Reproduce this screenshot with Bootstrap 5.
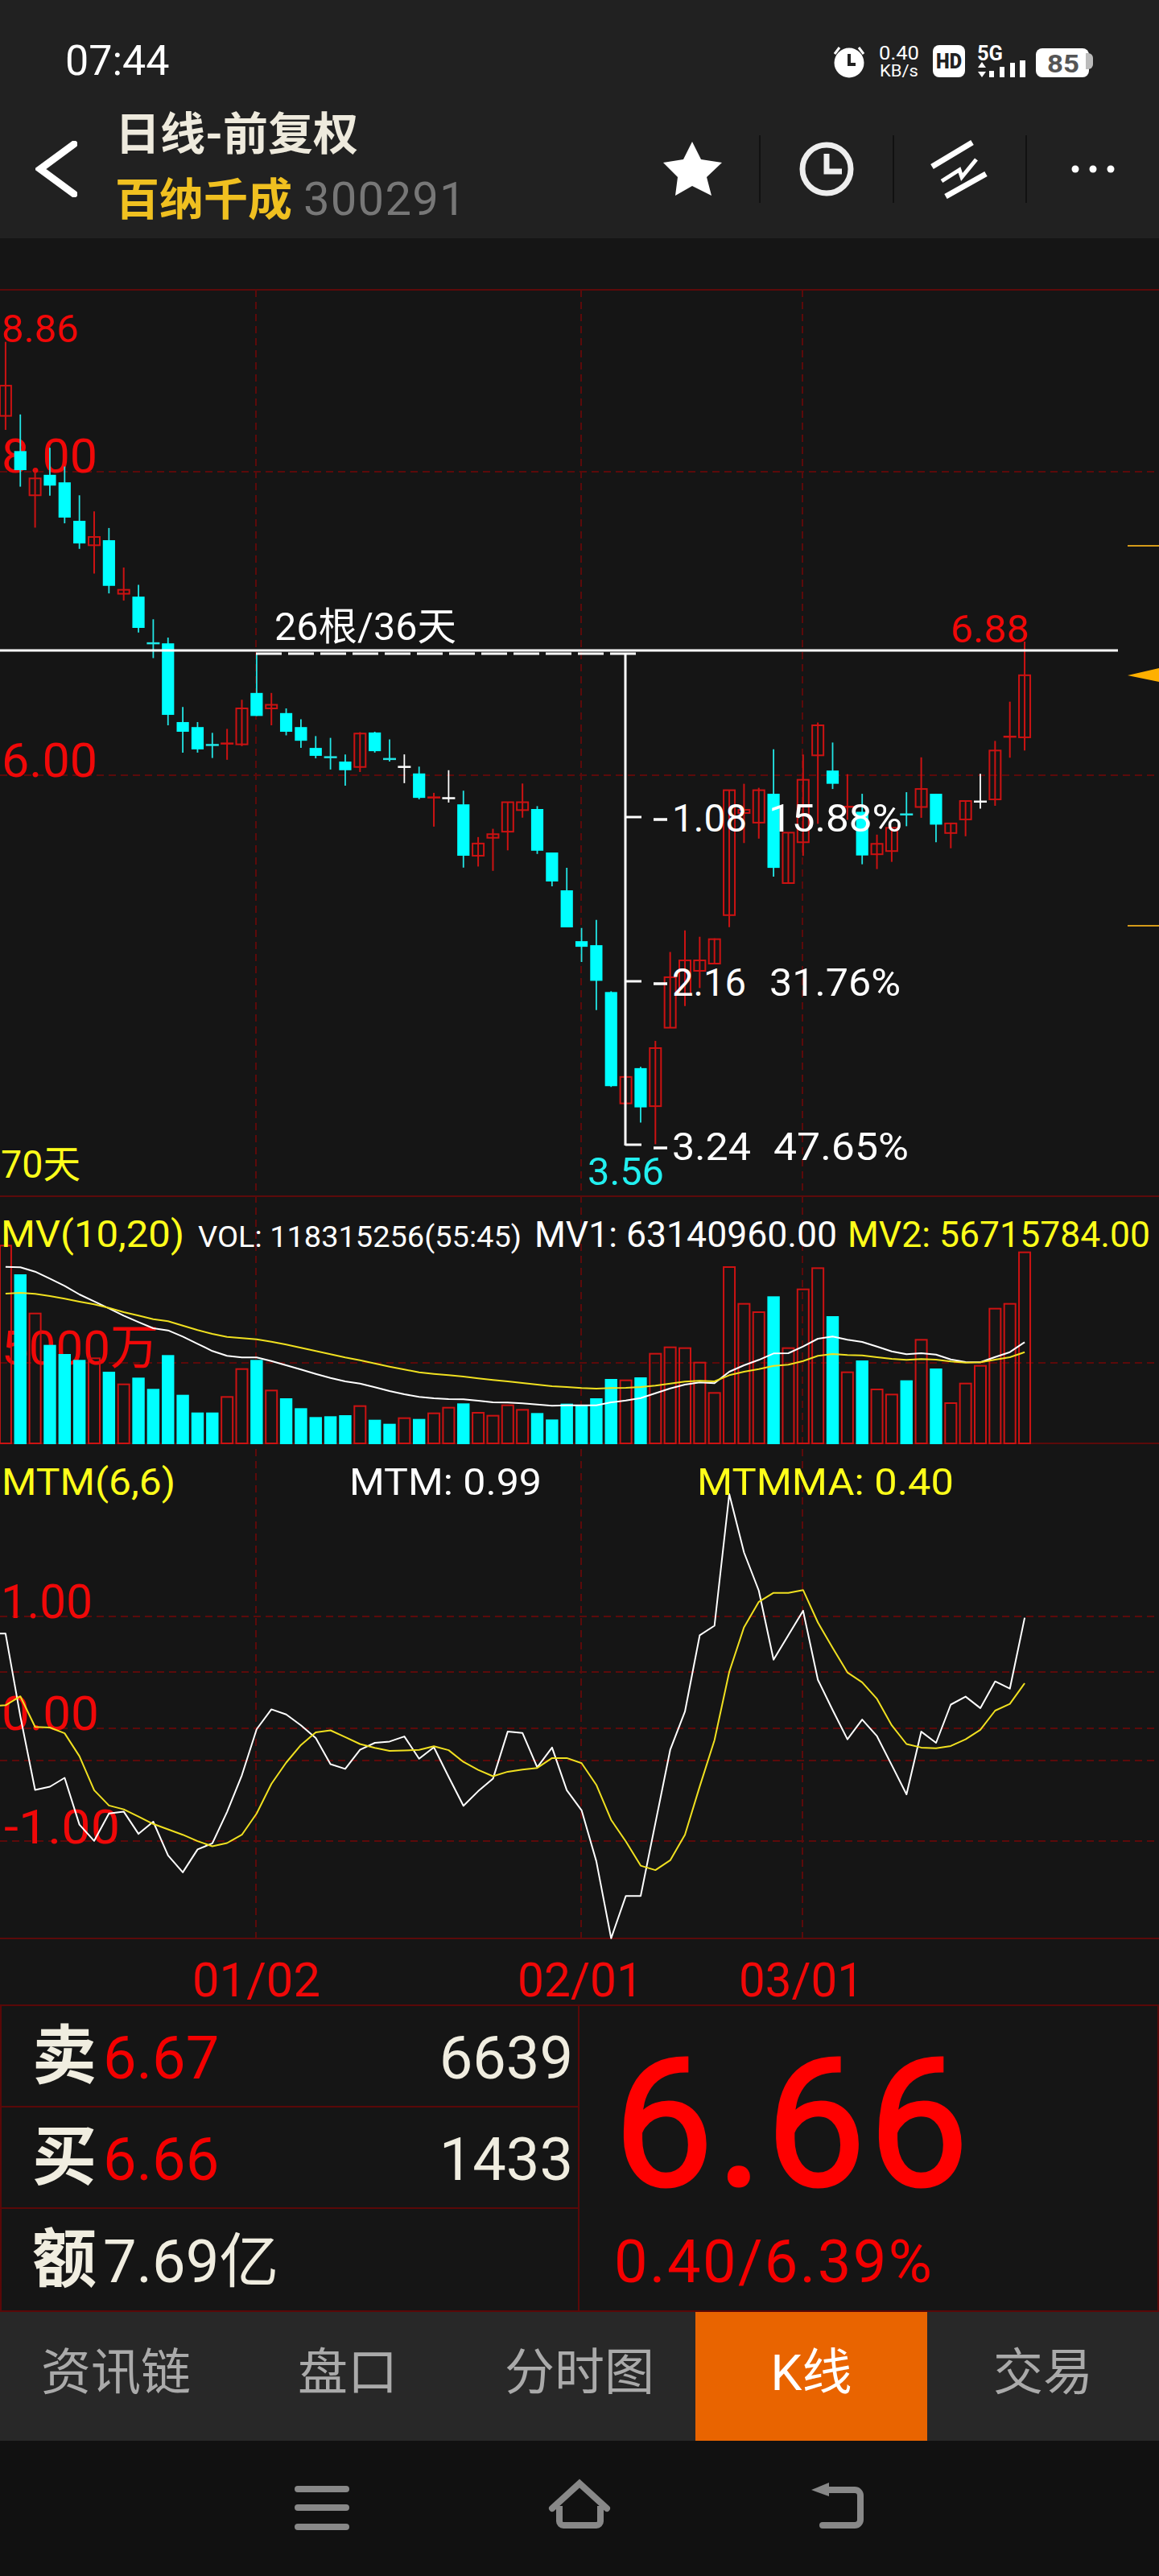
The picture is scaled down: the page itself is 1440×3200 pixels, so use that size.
<!DOCTYPE html>
<html lang="zh-CN">
<head>
<meta charset="utf-8">
<title>百纳千成 300291 日线</title>
<link href="https://cdn.jsdelivr.net/npm/bootstrap@5.3.0/dist/css/bootstrap.min.css" rel="stylesheet">
<style>
html,body{background:#151515;margin:0;width:1440px;}
body{font-family:Roboto,"Noto Sans CJK SC","Liberation Sans",sans-serif;color:#f0ede0;}
.top-head{background:#212121;height:296px;}
.status-row{height:130px;padding:46px 81px 0 81px;align-items:flex-start;}
.time-text{font-size:52px;line-height:60px;color:#fff;}
.status-icons{display:block;width:324px;height:60px;}
.tool-row{height:166px;padding-left:44px;}
.back-ico{display:block;width:52px;height:70px;margin-right:47px;margin-top:-6px;}
.title-stack{line-height:1;}
.title-main{font-size:56px;line-height:64px;font-weight:700;color:#eeeadd;margin-top:-12px;}
.title-sub{font-size:55px;line-height:64px;font-weight:700;color:#f0c020;margin-top:16px;}
.title-code{font-size:58px;font-weight:400;color:#777;margin-left:14px;letter-spacing:1.2px;}
.tool-group{margin-top:-6px;}
.tool-cell{width:165.5px;height:84px;display:flex;align-items:center;justify-content:center;border-right:2px solid #111;}
.tool-cell.last-cell{border-right:0;width:164px;}
.tool-cell svg{display:block;}
.chart-svg{display:block;width:1440px;height:2200px;margin-bottom:-6px;}
.quote-panel{height:382px;border:2px solid #5a0808;}
.quote-left{width:718px;border-right:2px solid #5a0808;}
.quote-row{height:126px;padding:6px 6px 0 38px;border-bottom:2px solid #5a0808;}
.quote-row.row-end{border-bottom:0;}
.q-mark{font-size:80px;line-height:1;font-weight:700;color:#f0ede0;width:88px;margin-top:-6px;}
.q-red{font-size:74px;line-height:1;color:#f40000;}
.q-cream{font-size:74px;line-height:1;color:#f0ede0;}
.quote-right{padding:36px 0 0 42px;}
.big-price{font-size:222px;line-height:1;color:#ff0000;letter-spacing:3px;-webkit-text-stroke:3px #ff0000;}
.big-change{font-size:74px;line-height:1;color:#f40000;margin-top:23px;margin-left:1px;letter-spacing:2.4px;}
.tab-strip{height:160px;background:#282828;}
.tab-link{font-size:62px;line-height:152px;height:160px;padding:0;color:#aaa;}
.tab-link:hover,.tab-link:focus{color:#aaa;}
.tab-on,.tab-on:hover,.tab-on:focus{background:#e96400;color:#fff;}
.sys-nav{height:168px;background:#111;}
.sys-nav svg{display:block;width:1440px;height:168px;}
</style>
</head>
<body>
<header class="top-head">
  <div class="d-flex justify-content-between status-row">
    <span class="time-text">07:44</span>
    <svg class="status-icons" viewBox="1036 46 324 60" aria-label="状态栏">
      <circle cx="1056" cy="78" r="18.5" fill="#fff"/>
      <path d="M1056 67v13h8" fill="none" stroke="#212121" stroke-width="4"/>
      <path d="M1038 67l6-8M1074 67l-6-8" stroke="#fff" stroke-width="3"/>
      <text x="1093" y="74" font-size="24" fill="#fff" textLength="50" lengthAdjust="spacingAndGlyphs" font-family="Roboto">0.40</text>
      <text x="1094" y="95" font-size="20" fill="#fff" textLength="48" lengthAdjust="spacingAndGlyphs" font-family="Roboto">KB/s</text>
      <rect x="1160" y="56" width="40" height="40" rx="8" fill="#fff"/>
      <text x="1164" y="85" font-size="26" font-weight="900" fill="#212121" textLength="32" lengthAdjust="spacingAndGlyphs" font-family="Roboto">HD</text>
      <text x="1215" y="75" font-size="25" font-weight="700" fill="#fff" textLength="32" lengthAdjust="spacingAndGlyphs" font-family="Roboto">5G</text>
      <path d="M1221 77l5 7h-10zM1221 96l-5-7h10z" fill="#fff"/>
      <path d="M1230 88h6v8h-6zM1243 83h6v13h-6zM1256 78h6v18h-6zM1268 75h7v21h-7z" fill="#fff"/>
      <rect x="1288" y="60" width="66" height="36" rx="8" fill="#fff"/>
      <path d="M1350 66h3a6 6 0 0 1 6 6v8a6 6 0 0 1-6 6h-3z" fill="#bbb"/>
      <text x="1302" y="90" font-size="32" font-weight="700" fill="#555" textLength="40" lengthAdjust="spacingAndGlyphs" font-family="Roboto">85</text>
    </svg>
  </div>
  <div class="d-flex align-items-center tool-row">
    <svg class="back-ico" viewBox="44 175 52 70"><path d="M92 179L50 210l42 31" fill="none" stroke="#fff" stroke-width="9" stroke-linecap="round" stroke-linejoin="miter"/></svg>
    <div class="title-stack">
      <div class="title-main">日线-前复权</div>
      <div class="title-sub">百纳千成<span class="title-code">300291</span></div>
    </div>
    <div class="ms-auto d-flex tool-group">
      <div class="tool-cell"><svg width="74" height="70" viewBox="824 176 74 70"><path d="M860 177l11 22 26 4-19 18 6 23-24-12-21 12 3-23-18-18 25-4z" fill="#fff"/></svg></div>
      <div class="tool-cell"><svg width="72" height="72" viewBox="992 174 72 72"><circle cx="1028" cy="210" r="30" fill="none" stroke="#eee" stroke-width="7"/><path d="M1028 191v22h19" fill="none" stroke="#eee" stroke-width="7"/></svg></div>
      <div class="tool-cell"><svg width="76" height="74" viewBox="1156 173 76 74"><path d="M1210 177l-50 30M1227 216l-50 28" fill="none" stroke="#fff" stroke-width="7"/><path d="M1172 225l22-14 3 9 18-22" fill="none" stroke="#fff" stroke-width="5"/></svg></div>
      <div class="tool-cell last-cell"><svg width="56" height="12" viewBox="1331 203 56 12"><circle cx="1337" cy="209" r="4.5" fill="#fff"/><circle cx="1359" cy="209" r="4.5" fill="#fff"/><circle cx="1381" cy="209" r="4.5" fill="#fff"/></svg></div>
    </div>
  </div>
</header>

<svg id="chart" class="chart-svg" viewBox="0 296 1440 2200" font-family="Roboto,'Noto Sans CJK SC',sans-serif"></svg>

<section class="d-flex quote-panel">
  <div class="quote-left">
    <div class="d-flex align-items-center quote-row"><span class="q-mark">卖</span><span class="q-red">6.67</span><span class="q-cream ms-auto">6639</span></div>
    <div class="d-flex align-items-center quote-row"><span class="q-mark">买</span><span class="q-red">6.66</span><span class="q-cream ms-auto">1433</span></div>
    <div class="d-flex align-items-center quote-row row-end"><span class="q-mark">额</span><span class="q-cream">7.69亿</span></div>
  </div>
  <div class="quote-right flex-grow-1">
    <div class="big-price">6.66</div>
    <div class="big-change">0.40/6.39%</div>
  </div>
</section>

<nav class="nav nav-justified tab-strip">
  <a class="nav-link tab-link" href="#">资讯链</a>
  <a class="nav-link tab-link" href="#">盘口</a>
  <a class="nav-link tab-link" href="#">分时图</a>
  <a class="nav-link tab-link tab-on" href="#">K线</a>
  <a class="nav-link tab-link" href="#">交易</a>
</nav>

<footer class="sys-nav">
  <svg viewBox="0 3032 1440 168" aria-label="系统导航">
    <path d="M370 3092h60M370 3115h60M370 3139h60" stroke="#888" stroke-width="8" stroke-linecap="round"/>
    <path d="M686 3116l34-31 34 31" fill="none" stroke="#888" stroke-width="8" stroke-linecap="round" stroke-linejoin="miter"/>
    <path d="M695 3113v19a5 5 0 0 0 5 5h41a5 5 0 0 0 5-5v-19" fill="none" stroke="#888" stroke-width="8"/>
    <path d="M1026 3093h36a7 7 0 0 1 7 7v30a7 7 0 0 1-7 7h-40" fill="none" stroke="#888" stroke-width="8" stroke-linecap="round"/>
    <path d="M1008 3093l22-9v17z" fill="#888"/>
  </svg>
</footer>

<script src="https://cdn.jsdelivr.net/npm/bootstrap@5.3.0/dist/js/bootstrap.bundle.min.js"></script>
<script>
(function(){
var svg=document.getElementById('chart'),out=[];
var xi=function(i){return 6.9+18.35*i;};
function T(s,x,y,size,color,w){out.push('<text x="'+x+'" y="'+y+'" font-size="'+size+'" fill="'+color+'"'+(w?' textLength="'+w+'" lengthAdjust="spacingAndGlyphs"':'')+'>'+s+'</text>');}
function L(x1,y1,x2,y2,c,sw,dash){out.push('<line x1="'+x1+'" y1="'+y1+'" x2="'+x2+'" y2="'+y2+'" stroke="'+c+'" stroke-width="'+sw+'"'+(dash?' stroke-dasharray="'+dash+'"':'')+'/>');}
function R(x,y,w,h,fill,stroke){out.push('<rect x="'+x+'" y="'+y+'" width="'+w+'" height="'+h+'" fill="'+fill+'"'+(stroke?' stroke="'+stroke+'" stroke-width="2"':'')+'/>');}
var GD='#5c0a0a',RED='#f00808',RB='#cc1212',CY='#00ffff',YE='#ffff1a';
[360,1486,1793,2408].forEach(function(y){L(0,y,1440,y,GD,2);});
[586,963,1693,2008,2077,2147,2187,2287].forEach(function(y){L(0,y,1440,y,GD,2,'9 6');});
[318,722,997].forEach(function(x){L(x,360,x,2408,GD,2,'9 6');});
T('8.86',2,425,48,RED,96);
T('8.00',2,587,60,RED,119);
T('6.00',2,965,60,RED,119);
T('70天',1,1463,48,YE,99);
T('5000万',2,1695,60,RED,195);
T('1.00',1,2010,60,RED,114);
T('0.00',2,2149,60,RED,121);
T('-1.00',5,2290,60,RED,144);
var a=function(v){return 380+v/2.24;},b=function(v){return 700+v/2.01;},c=function(v){return v;};
var K=[
[100,222,306,345,'r',a],[302,404,457,503,'c',a],[452,480,527,617,'r',a],[395,470,500,528,'c',a],[447,491,589,605,'c',a],
[527,598,661,676,'c',a],[572,643,666,745,'r',a],[618,652,779,800,'c',a],[728,790,801,820,'r',a],[776,809,896,909,'c',a],
[872,936,938,980,'c',a],[923,939,1138,1167,'c',a],[1116,1158,1185,1243,'c',a],[1158,1172,1234,1243,'c',a],[1188,1219,1221,1258,'c',a],
[1177,1215,1219,1263,'r',a],[1096,1120,1220,1225,'r',a],[968,1077,1141,1141,'c',a],[1077,1110,1120,1167,'r',a],[1120,1133,1185,1195,'c',a],
[1150,1172,1210,1230,'c',a],[1197,1230,1252,1259,'c',a],[1202,1253,1255,1290,'c',a],[1248,1268,1292,1335,'c',a],[1186,1190,1283,1297,'r',a],
[1185,1187,1239,1243,'c',a],[1206,1258,1260,1268,'c',a],[1248,1280,1282,1328,'w',a],[1282,1301,1369,1373,'c',a],[1355,1365,1369,1449,'r',a],
[1292,1367,1369,1382,'w',a],[1349,1387,1530,1563,'c',a],[1478,1496,1530,1560,'r',a],[1455,1470,1480,1572,'r',a],[1380,1381,1463,1515,'r',a],
[1329,1381,1403,1424,'r',a],[1392,1400,1516,1525,'c',a],[1059,1059,1095,1101,'c',c],[1078,1106,1152,1152,'c',c],
[910,943,957,995,'c',b],[890,953,1042,1115,'c',b],[1068,1070,1305,1307,'c',b],[1282,1282,1348,1348,'r',b],[1257,1260,1358,1396,'c',b],
[1192,1210,1355,1450,'r',b],[970,1033,1159,1159,'r',b],[916,991,1077,1105,'r',b],[932,991,1017,1060,'r',b],[936,938,999,1000,'r',b],
[566,566,878,908,'r',b],[550,615,623,698,'r',b],[560,566,647,687,'r',b],[464,575,760,782,'c',b],[672,672,798,798,'r',b],
[477,540,696,730,'r',b],[397,404,479,650,'r',b],[447,517,550,563,'c',b],[526,605,608,640,'r',b],[575,620,729,751,'c',b],
[677,700,726,763,'r',b],[660,660,718,745,'r',b],[571,624,626,656,'c',b],[484,563,608,635,'r',b],[575,575,652,696,'c',b],
[649,649,673,711,'r',b],[593,593,639,681,'r',b],[525,592,594,612,'w',b],[443,467,589,605,'r',b],[345,430,434,485,'r',b],[195,279,434,467,'r',b]
];
K.forEach(function(k,i){
  var f=k[5],x=xi(i),hi=f(k[0]),t=f(k[1]),bt=f(k[2]),lo=f(k[3]),kind=k[4],h=bt-t;
  var wc=kind==='r'?RB:(kind==='w'?'#fff':'#22e6e6');
  L(x,hi,x,lo,wc,kind==='r'?2:1.8);
  if(h<3){R(x-8,t,16,Math.max(h,2.5),wc);}
  else if(kind==='r'){R(x-7,t,14,h,'none',RB);}
  else{R(x-7.6,t,15.2,h,CY);}
});
var V=[202,309,455,572,606,628,622,672,719,694,736,610,758,824,824,766,662,628,742,771,808,841,838,834,800,851,866,845,848,827,806,790,825,836,797,814,826,850,791,795,771,699,704,693,605,581,584,638,751,282,419,450,391,584,365,286,465,674,630,738,757,704,553,660,789,716,650,437,419,227];
var VC='rcrcccrcrcccccc'+'rrcrccccc'+'rccrcrrc'+'rrrr'+'cccccc'+'rc'+'rrrrrrrr'+'c'+'rrr'+'c'+'r'+'c'+'rr'+'c'+'r'+'c'+'rrrrrr';
V.forEach(function(v,i){
  var y=1480+v/3,x=xi(i);
  if(VC.charAt(i)==='c'){R(x-7.7,y,15.4,1794-y,CY);}
  else{R(x-7,y,14,1793-y,'none',RB);}
});
function P(arr,f,col,sw,lead){
  var pts=arr.map(function(v,i){return xi(i).toFixed(1)+','+f(v,i).toFixed(1);});
  if(lead!==undefined){pts.unshift('0,'+f(lead,0).toFixed(1));}
  out.push('<polyline points="'+pts.join(' ')+'" fill="none" stroke="'+col+'" stroke-width="'+sw+'" stroke-linejoin="round"/>');
}
var v3=function(v){return 1480+v/3;};
P([281,283,299,325,352,384,410,436,463,487,510,518,541,568,595,613,619,619,632,648,664,680,695,708,716,730,744,756,766,771,774,775,780,786,787,790,794,799,797,797,797,786,779,770,752,734,720,712,715,672,648,628,604,603,578,549,541,553,561,578,596,607,603,608,626,636,637,617,599,562],v3,'#fff',2);
P([381,378,382,390,400,411,421,434,450,463,476,484,500,517,531,542,547,551,560,571,583,595,607,619,629,641,653,664,674,680,685,690,697,703,708,714,720,726,729,733,735,733,732,729,724,716,709,706,708,685,672,662,650,646,632,613,606,610,611,618,624,628,625,627,634,638,637,627,618,599],v3,'#f0e020',2);
var m=function(v){return 1800+v/2.529;};
P([580,840,1071,1061,1033,1180,1231,1145,1139,1209,1171,1277,1330,1258,1239,1140,1025,880,818,834,868,908,990,1005,945,923,919,903,973,937,1030,1121,1075,1036,888,892,1000,938,1072,1135,1295,1537,1404,1404,1175,945,825,585,555,142,325,445,662,585,508,725,820,912,850,902,993,1085,888,923,803,778,814,730,753,530],m,'#fff',2,580);
P([805,777,873,875,893,965,1072,1120,1132,1155,1178,1195,1212,1232,1248,1238,1212,1145,1052,985,930,890,884,905,927,939,948,947,945,934,946,983,1008,1028,1014,1007,1002,971,971,987,1055,1165,1233,1309,1323,1292,1212,1060,915,700,560,480,452,452,443,545,625,702,733,785,868,927,938,940,933,912,882,822,801,736],m,'#f0e020',2,806);
L(0,808,1389,808,'#fff',3);
L(318,812,797,812,'#fff',3,'32 8');
L(777,812,777,1423,'#fff',3);
[1015,1219,1422].forEach(function(y){L(777,y,797,y,'#fff',3);});
T('26根/36天',341,795,48,'#fff',226);
[[1033,'1.08','15.88%',835,93,955,166],[1237,'2.16','31.76%',835,92,956,163],[1441,'3.24','47.65%',835,98,961,168]].forEach(function(r){
  L(812,r[0]-15,829,r[0]-15,'#fff',3.5);
  T(r[1],r[3],r[0],48,'#fff',r[4]);
  T(r[2],r[5],r[0],48,'#fff',r[6]);
});
T('6.88',1181,798,48,RED,98);
T('3.56',730,1472,48,'#22f0f0',95);
L(1401,678,1440,678,'#d49a1a',2);
L(1401,1150,1440,1150,'#d49a1a',2);
out.push('<path d="M1401 839L1440 830V847z" fill="#ffb000"/>');
T('MV(10,20)',1,1549,46,YE,228);
T('VOL: 118315256(55:45)',246,1549,37,'#fff',402);
T('MV1: 63140960.00',664,1549,45,'#fff',376);
T('MV2: 56715784.00',1053,1549,45,YE,376);
T('MTM(6,6)',2,1857,46,YE,216);
T('MTM: 0.99',434,1857,46,'#fff',239);
T('MTMMA: 0.40',866,1857,46,YE,319);
T('01/02',239,2480,60,RED,159);
T('02/01',643,2480,60,RED,156);
T('03/01',918,2480,60,RED,155);
svg.innerHTML=out.join('');
})();
</script>
</body>
</html>
